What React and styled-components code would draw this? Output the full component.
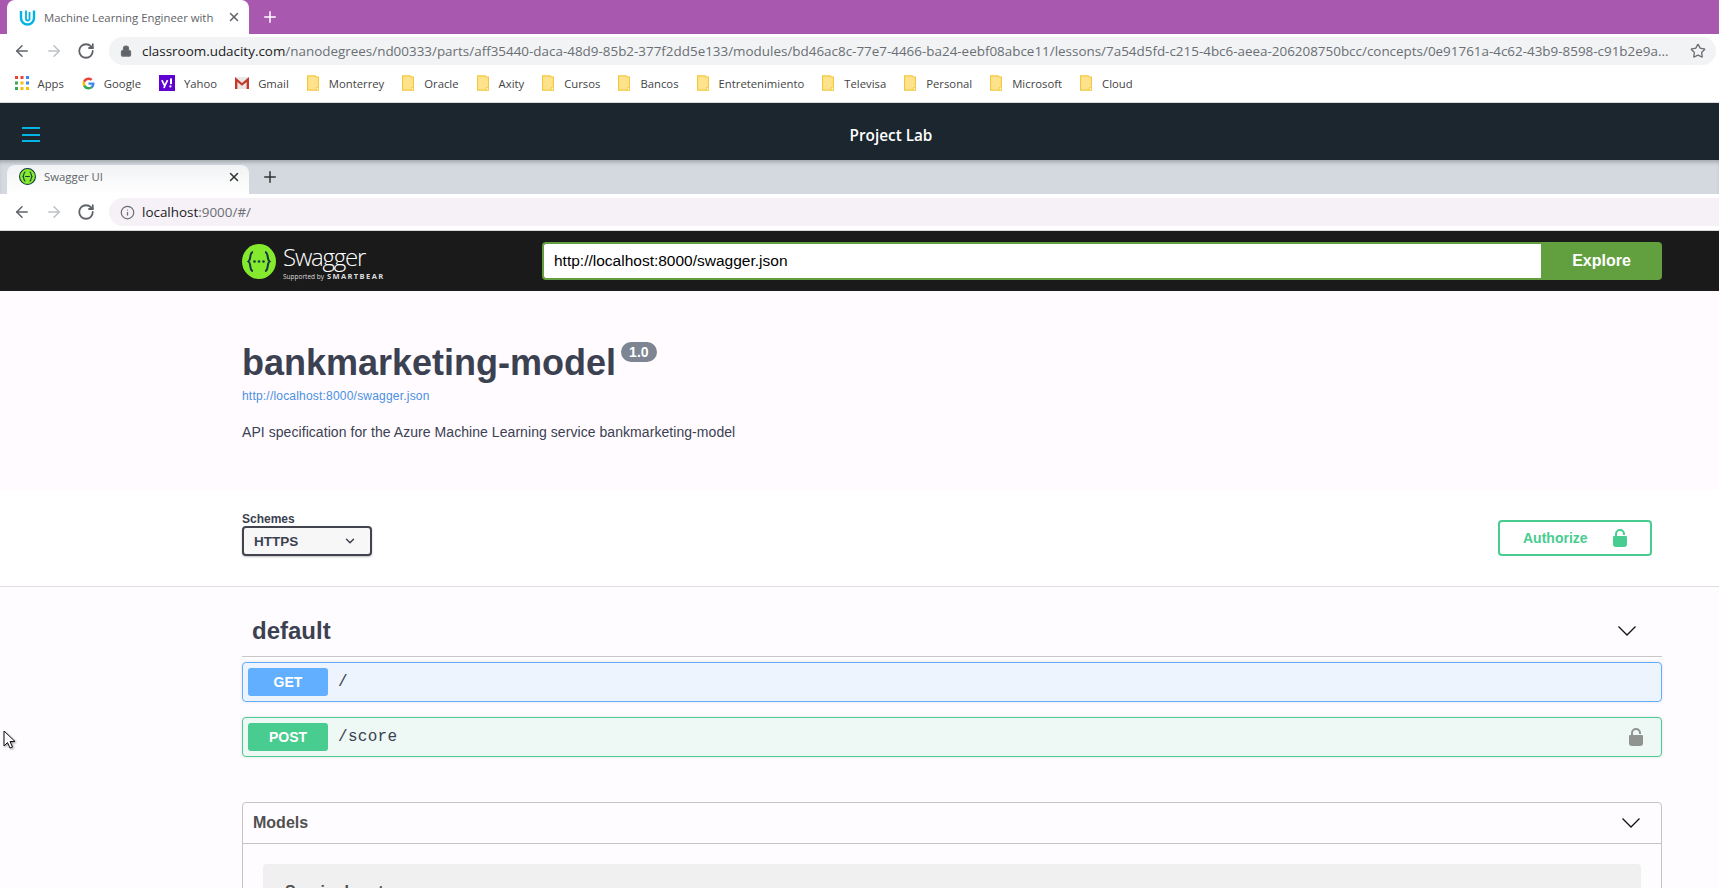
import React from 'react'
import styled, { createGlobalStyle } from 'styled-components'
import { ArrowLeft, ArrowRight, RotateCw, Star, X, Plus, Info, Lock, ChevronDown } from 'lucide-react'

const GlobalStyle = createGlobalStyle`
  html, body {
    margin: 0;
    padding: 0;
    background: #fffcff;
    overflow: hidden;
  }
  * { box-sizing: border-box; }
`

const Page = styled.div`
  width: 1719px;
  height: 888px;
  overflow: hidden;
  font-family: "Open Sans", "Noto Sans", sans-serif;
  display: flex;
  flex-direction: column;
`

const TabStrip = styled.div`
  height: ${p => p.$h}px;
  flex: none;
  background: ${p => p.$bg};
  display: flex;
  align-items: flex-end;
  padding-left: 7px;
`
const Tab = styled.div`
  width: 242px;
  height: ${p => p.$h}px;
  background: ${p => p.$bg};
  border-radius: 8px 8px 0 0;
  display: flex;
  align-items: center;
  padding: 0 8px ${p => p.$pb || 0}px 12px;
  gap: 8px;
  font-size: 11.35px;
  color: #5f6368;
`
const TabTitle = styled.span`
  flex: 1;
  white-space: nowrap;
  overflow: hidden;
`
const NewTab = styled.div`
  display: flex;
  align-self: center;
  margin: 0 0 ${p => p.$mb || 0}px 12px;
  color: ${p => p.$c};
`
const Toolbar = styled.div`
  height: ${p => p.$h}px;
  flex: none;
  background: #fff;
  display: flex;
  align-items: center;
  padding: 0 ${p => p.$pr}px 0 13px;
  gap: 14px;
  color: #5f6368;
`
const Omnibox = styled.div`
  flex: 1;
  min-width: 0;
  height: 28px;
  border-radius: ${p => p.$radius};
  background: ${p => p.$bg};
  display: flex;
  align-items: center;
  padding: 0 10px 0 11px;
  gap: ${p => p.$gap}px;
  font-size: 13.43px;
  color: #6b6f74;
`
const UrlText = styled.span`
  flex: 1;
  white-space: nowrap;
  overflow: hidden;
`
const UrlHost = styled.span`
  color: #202124;
`
const BookmarkBar = styled.div`
  height: 36px;
  flex: none;
  background: #fff;
  border-bottom: 1px solid #dadce0;
  display: flex;
  align-items: center;
  padding: 0 0 3px 14.5px;
  gap: 18px;
  font-size: 11.3px;
  color: #444;
`
const Bookmark = styled.div`
  display: flex;
  align-items: center;
  gap: ${p => p.$gap || 9}px;
  white-space: nowrap;
`
const LabBar = styled.div`
  height: 57px;
  flex: none;
  background: #1c262f;
  position: relative;
  display: flex;
  align-items: center;
  justify-content: center;
  color: #fff;
  font-size: 15.3px;
  font-weight: 600;
  padding: 6px 0 0 63px;
`
const Burger = styled.div`
  position: absolute;
  left: 22px;
  top: 24px;
  width: 18px;
  height: 15px;
  border-top: 2px solid #02b3e4;
  border-bottom: 2px solid #02b3e4;
  &::after {
    content: "";
    display: block;
    height: 2px;
    margin-top: 4.5px;
    background: #02b3e4;
  }
`
const Frame = styled.div`
  flex: 1;
  min-height: 0;
  display: flex;
  flex-direction: column;
  box-shadow: inset 0 4px 4px -2px rgba(0,0,0,.25);
  padding-top: 5px;
  background: #d3d9de;
`
const SwaggerTop = styled.div`
  height: 61px;
  flex: none;
  background: #1a1a1a;
  border-top: 1px solid #d8d8d8;
  display: flex;
  align-items: center;
  padding: 0 0 0 242px;
`
const LogoWrap = styled.div`
  width: 300px;
  flex: none;
  display: flex;
  gap: 7px;
  align-items: center;
`
const LogoText = styled.div`
  display: flex;
  flex-direction: column;
  color: #fff;
  padding-top: 2px;
`
const LogoName = styled.span`
  font-family: "Open Sans", sans-serif;
  font-size: 24px;
  line-height: 26px;
  letter-spacing: -1.2px;
  font-weight: 300;
  margin-bottom: 2px;
`
const LogoSub = styled.span`
  font-size: 6.5px;
  line-height: 9px;
  white-space: nowrap;
  color: #ddd;
  b {
    font-size: 7.5px;
    letter-spacing: 1.4px;
    margin-left: 3px;
  }
`
const ExploreForm = styled.div`
  width: 1120px;
  height: 38px;
  display: flex;
`
const UrlInput = styled.div`
  flex: 1;
  background: #fff;
  border: 2px solid #62a03f;
  border-right: 0;
  border-radius: 4px 0 0 4px;
  font-family: "Liberation Sans", Arial, sans-serif;
  font-size: 15.5px;
  display: flex;
  align-items: center;
  padding-left: 10px;
  color: #000;
`
const ExploreBtn = styled.div`
  width: 121px;
  background: #62a03f;
  border-radius: 0 4px 4px 0;
  color: #fff;
  font-family: "Liberation Sans", Arial, sans-serif;
  font-size: 16px;
  font-weight: 700;
  display: flex;
  align-items: center;
  justify-content: center;
`
const Sans = styled.div`
  font-family: "Liberation Sans", Arial, sans-serif;
  color: #3b4151;
`
const InfoBlock = styled(Sans)`
  height: 199px;
  flex: none;
  background: #fffbff;
  padding: 49px 0 0 242px;
`
const Title = styled.h1`
  margin: 0;
  font-size: 36px;
  line-height: 45px;
  font-weight: 700;
  display: flex;
  align-items: flex-start;
`
const Version = styled.span`
  margin: 2px 0 0 5px;
  height: 20px;
  padding: 0 8px;
  border-radius: 10px;
  background: #7d8492;
  color: #fff;
  font-size: 14px;
  font-weight: 700;
  line-height: 20px;
`
const BaseLink = styled.div`
  font-size: 12px;
  line-height: 15px;
  letter-spacing: 0.2px;
  margin-top: 4px;
  color: #4990e2;
`
const Description = styled.p`
  margin: 19px 0 0;
  font-size: 14px;
  line-height: 18px;
  letter-spacing: 0.06px;
`
const SchemeBar = styled(Sans)`
  height: 97px;
  flex: none;
  background: #fff;
  border-bottom: 1px solid #dedede;
  box-shadow: 0 1px 2px rgba(0,0,0,.06);
  display: flex;
  justify-content: space-between;
  padding: 23px 67px 0 242px;
`
const SchemeLabel = styled.div`
  font-size: 12px;
  line-height: 12px;
  font-weight: 700;
  margin-bottom: 1px;
`
const SchemeSelect = styled.div`
  width: 130px;
  height: 30px;
  border: 2px solid #41444e;
  border-radius: 4px;
  background: #f7f7f7;
  box-shadow: 0 1px 2px rgba(0,0,0,.25);
  display: flex;
  align-items: center;
  justify-content: space-between;
  padding: 0 13px 0 10px;
  font-size: 13.5px;
  font-weight: 700;
`
const AuthorizeBtn = styled.div`
  width: 154px;
  height: 36px;
  margin-top: 7px;
  border: 2px solid #49cc90;
  border-radius: 4px;
  color: #49cc90;
  font-size: 14px;
  font-weight: 700;
  display: flex;
  align-items: center;
  padding-left: 23px;
  gap: 25px;
`
const Content = styled(Sans)`
  flex: 1;
  background: #fffcff;
  padding: 0 57px 0 242px;
  position: relative;
`
const TagRow = styled.div`
  height: 70px;
  border-bottom: 1px solid #c8c8cc;
  display: flex;
  align-items: center;
  justify-content: space-between;
  padding: 18px 26px 0 10px;
  font-size: 24px;
  font-weight: 700;
`
const Operation = styled.div`
  height: 40px;
  margin-top: ${p => p.$mt}px;
  border: 1px solid ${p => p.$c};
  border-radius: 4px;
  background: ${p => p.$bg};
  box-shadow: 0 0 3px rgba(0,0,0,.12);
  display: flex;
  align-items: center;
  padding: 0 18px 0 5px;
`
const Method = styled.div`
  width: 80px;
  height: 28px;
  border-radius: 3px;
  background: ${p => p.$c};
  color: #fff;
  font-size: 14px;
  font-weight: 700;
  display: flex;
  align-items: center;
  justify-content: center;
  margin-right: 10px;
`
const OpPath = styled.span`
  flex: 1;
  font-family: "Liberation Mono", monospace;
  font-size: 16px;
  letter-spacing: 0.3px;
  font-weight: 400;
`
const ModelsBox = styled.div`
  margin-top: 45px;
  height: 200px;
  border: 1px solid #c4c4c8;
  border-radius: 4px;
`
const ModelsHead = styled.div`
  height: 41px;
  border-bottom: 1px solid #c4c4c8;
  display: flex;
  align-items: center;
  justify-content: space-between;
  padding: 0 21px 0 10px;
  font-size: 16px;
  font-weight: 700;
  color: #505050;
`
const ModelRow = styled.div`
  margin: 20px 20px 0;
  height: 100px;
  background: #eff0ef;
  border-radius: 4px;
  padding: 19px 22px;
  font-size: 16px;
  font-weight: 700;
  color: #505050;
`
const Cursor = styled.svg`
  position: absolute;
  left: 3px;
  top: 143px;
  filter: drop-shadow(1px 1px 1px rgba(0,0,0,.4));
`

const UdacityIcon = () => (
  <svg width="17" height="17" viewBox="0 0 17 17" fill="none">
    <path d="M2 2v7a6.500 6.500 0 0 0 13 0V1.500" stroke="#02b3e4" strokeWidth="2.400" />
    <path d="M7 1.500V10c0 2 3.500 2 3.500 0V3" stroke="#02b3e4" strokeWidth="1.800" />
  </svg>
)
const SwaggerFavicon = () => (
  <svg width="17" height="17" viewBox="0 0 16 16">
    <circle cx="8" cy="8" r="7.500" fill="#85ea2d" stroke="#173647" strokeWidth="1" />
    <path d="M6 3.500C4 4 5 7 3.800 8 5 9 4 12 6 12.500M10 3.500c2 .5 1 3.500 2.200 4.500-1.200 1-.2 4-2.200 4.500M5.800 8h4.400" fill="none" stroke="#173647" strokeWidth="1" />
  </svg>
)
const SwaggerLogo = () => (
  <svg width="34" height="35" viewBox="0 0 34 35">
    <ellipse cx="17" cy="17.500" rx="17" ry="17.500" fill="#85ea2d" />
    <path d="M11 8c-4 .5-1.500 7.500-4.500 9.500C9.500 19.500 7 26.500 11 27M23 8c4 .5 1.500 7.500 4.500 9.500-3 2-.5 9-4.500 9.500" fill="none" stroke="#173647" strokeWidth="2" />
    <circle cx="12.500" cy="17.500" r="1.300" fill="#173647" />
    <circle cx="17" cy="17.500" r="1.300" fill="#173647" />
    <circle cx="21.500" cy="17.500" r="1.300" fill="#173647" />
  </svg>
)
const appColors = ['#ea4335', '#ea4335', '#4285f4', '#34a853', '#fbbc05', '#4285f4', '#34a853', '#fbbc05', '#fbbc05']
const AppsIcon = () => (
  <svg width="14" height="14" viewBox="0 0 14 14">
    {appColors.map((fill, i) => (
      <rect key={i} x={(i % 3) * 5.500} y={Math.floor(i / 3) * 5.500} width="3" height="3" fill={fill} />
    ))}
  </svg>
)
const GoogleIcon = () => (
  <svg width="13" height="13" viewBox="0 0 48 48">
    <path fill="#4285f4" d="M46 24.500c0-1.600-.1-3.100-.4-4.500H24v8.600h12.400c-.5 2.900-2.100 5.300-4.600 7l7.100 5.500c4.200-3.900 7.100-9.600 7.100-16.600z" />
    <path fill="#34a853" d="M24 46c6 0 11-2 14.900-5.400l-7.100-5.500c-2 1.300-4.600 2.100-7.800 2.100-5.800 0-10.700-3.900-12.400-9.200l-7.300 5.700C7.900 41 15.300 46 24 46z" />
    <path fill="#fbbc05" d="M11.600 28.500c-.9-2.800-.9-5.700 0-8.500l-7.300-5.700c-3.100 6.100-3.100 13.300 0 19.900z" />
    <path fill="#ea4335" d="M24 10.800c3.300 0 6.200 1.100 8.500 3.300l6.400-6.400C35 4.100 30 2 24 2 15.300 2 7.900 7 4.300 14.300l7.300 5.700c1.700-5.300 6.600-9.200 12.400-9.200z" />
  </svg>
)
const YahooIcon = () => (
  <svg width="16" height="16" viewBox="0 0 14 14">
    <rect width="14" height="14" fill="#5f01d1" />
    <path d="M2.500 4.500 5 9.500 4.500 11.500M7.500 4.500 5 9.500" fill="none" stroke="#fff" strokeWidth="1.500" />
    <path d="M10.500 3v5" stroke="#fff" strokeWidth="1.800" />
    <circle cx="10" cy="10" r="1" fill="#fff" />
  </svg>
)
const GmailIcon = () => (
  <svg width="14" height="12" viewBox="0 0 13 11">
    <rect width="13" height="11" fill="#e8e8e8" />
    <path d="M0 11V0l6.500 5.500L13 0v11h-2.200V4.500L6.500 8 2.200 4.500V11z" fill="#c5382c" />
  </svg>
)
const FolderIcon = () => (
  <svg width="12" height="16" viewBox="0 0 11 14">
    <path d="M.5.500h7l1 1v0h2v12H.5z" fill="#fee38c" stroke="#f1c83f" />
    <rect x="8.500" y="11" width="2" height="2.500" fill="#fff2c0" stroke="#f1c83f" strokeWidth=".6" />
  </svg>
)
const PadLock = ({ c, size = 14 }) => (
  <svg width={size} height={size * 18 / 14} viewBox="0 0 14 18">
    <path d="M3 9V5a4 4 0 0 1 8 0v1" fill="none" stroke={c} strokeWidth="2" />
    <path d="M1 7h12a1 1 0 0 1 1 1v7a3 3 0 0 1-3 3H3a3 3 0 0 1-3-3V8a1 1 0 0 1 1-1z" fill={c} />
  </svg>
)
const ThinChevron = ({ w = 18 }) => (
  <svg width={w} height={w * 10 / 18} viewBox="0 0 18 10" fill="none">
    <path d="M.5.500 9 9l8.500-8.500" stroke="#111" strokeWidth="1.300" />
  </svg>
)

const folders = ['Monterrey', 'Oracle', 'Axity', 'Cursos', 'Bancos', 'Entretenimiento', 'Televisa', 'Personal', 'Microsoft', 'Cloud']

const NavButtons = () => (
  <>
    <ArrowLeft size={18} strokeWidth={2} />
    <ArrowRight size={18} strokeWidth={2} color="#bdc1c6" />
    <RotateCw size={18} strokeWidth={2.400} />
  </>
)

const App = () => (
  <Page>
    <GlobalStyle />
    <TabStrip $h={34} $bg="#a958b0">
      <Tab $h={34} $bg="#fff">
        <UdacityIcon />
        <TabTitle>Machine Learning Engineer with</TabTitle>
        <X size={14} strokeWidth={2.500} />
      </Tab>
      <NewTab $c="#fff"><Plus size={18} strokeWidth={2} /></NewTab>
    </TabStrip>
    <Toolbar $h={33} $pr={3}>
      <NavButtons />
      <Omnibox $bg="#f1f3f4" $gap={10} $radius="14px">
        <Lock size={12} fill="#5f6368" strokeWidth={2.500} />
        <UrlText>
          <UrlHost>classroom.udacity.com</UrlHost>/nanodegrees/nd00333/parts/aff35440-daca-48d9-85b2-377f2dd5e133/modules/bd46ac8c-77e7-4466-ba24-eebf08abce11/lessons/7a54d5fd-c215-4bc6-aeea-206208750bcc/concepts/0e91761a-4c62-43b9-8598-c91b2e9a...
        </UrlText>
        <Star size={16} strokeWidth={2} />
      </Omnibox>
    </Toolbar>
    <BookmarkBar>
      <Bookmark><AppsIcon />Apps</Bookmark>
      <Bookmark><GoogleIcon />Google</Bookmark>
      <Bookmark><YahooIcon />Yahoo</Bookmark>
      <Bookmark><GmailIcon />Gmail</Bookmark>
      {folders.map(name => (
        <Bookmark key={name} $gap={10}><FolderIcon />{name}</Bookmark>
      ))}
    </BookmarkBar>
    <LabBar><Burger />Project Lab</LabBar>
    <Frame>
      <TabStrip $h={29} $bg="transparent">
        <Tab $h={29} $pb={6} $bg="linear-gradient(#f1f3f4, #fff)">
          <SwaggerFavicon />
          <TabTitle>Swagger UI</TabTitle>
          <X size={14} strokeWidth={2.500} color="#333" />
        </Tab>
        <NewTab $c="#333" $mb={6}><Plus size={18} strokeWidth={2} /></NewTab>
      </TabStrip>
      <Toolbar $h={36} $pr={0}>
        <NavButtons />
        <Omnibox $bg="#f6f1f6" $gap={7} $radius="14px 0 0 14px">
          <Info size={15} strokeWidth={2} />
          <UrlText><UrlHost>localhost</UrlHost>:9000/#/</UrlText>
        </Omnibox>
      </Toolbar>
      <SwaggerTop>
        <LogoWrap>
          <SwaggerLogo />
          <LogoText>
            <LogoName>Swagger</LogoName>
            <LogoSub>Supported by<b>SMARTBEAR</b></LogoSub>
          </LogoText>
        </LogoWrap>
        <ExploreForm>
          <UrlInput>http://localhost:8000/swagger.json</UrlInput>
          <ExploreBtn>Explore</ExploreBtn>
        </ExploreForm>
      </SwaggerTop>
      <InfoBlock>
        <Title>bankmarketing-model<Version>1.0</Version></Title>
        <BaseLink>http://localhost:8000/swagger.json</BaseLink>
        <Description>API specification for the Azure Machine Learning service bankmarketing-model</Description>
      </InfoBlock>
      <SchemeBar>
        <div>
          <SchemeLabel>Schemes</SchemeLabel>
          <SchemeSelect>HTTPS<ChevronDown size={14} strokeWidth={2.500} /></SchemeSelect>
        </div>
        <AuthorizeBtn>Authorize<PadLock c="#49cc90" /></AuthorizeBtn>
      </SchemeBar>
      <Content>
        <TagRow>default<ThinChevron /></TagRow>
        <Operation $mt={5} $c="#61affe" $bg="#edf4fe">
          <Method $c="#61affe">GET</Method>
          <OpPath>/</OpPath>
        </Operation>
        <Operation $mt={15} $c="#49cc90" $bg="#eef8f5">
          <Method $c="#49cc90">POST</Method>
          <OpPath>/score</OpPath>
          <PadLock c="#8f9490" />
        </Operation>
        <ModelsBox>
          <ModelsHead>Models<ThinChevron /></ModelsHead>
          <ModelRow>ScoringInput</ModelRow>
        </ModelsBox>
        <Cursor width="14" height="20" viewBox="0 0 14 20">
          <path d="M1 1v15l3.500-3.500L7 18l2.500-1-2.500-5.500h5z" fill="#fff" stroke="#111" strokeWidth="1" />
        </Cursor>
      </Content>
    </Frame>
  </Page>
)

export default App
